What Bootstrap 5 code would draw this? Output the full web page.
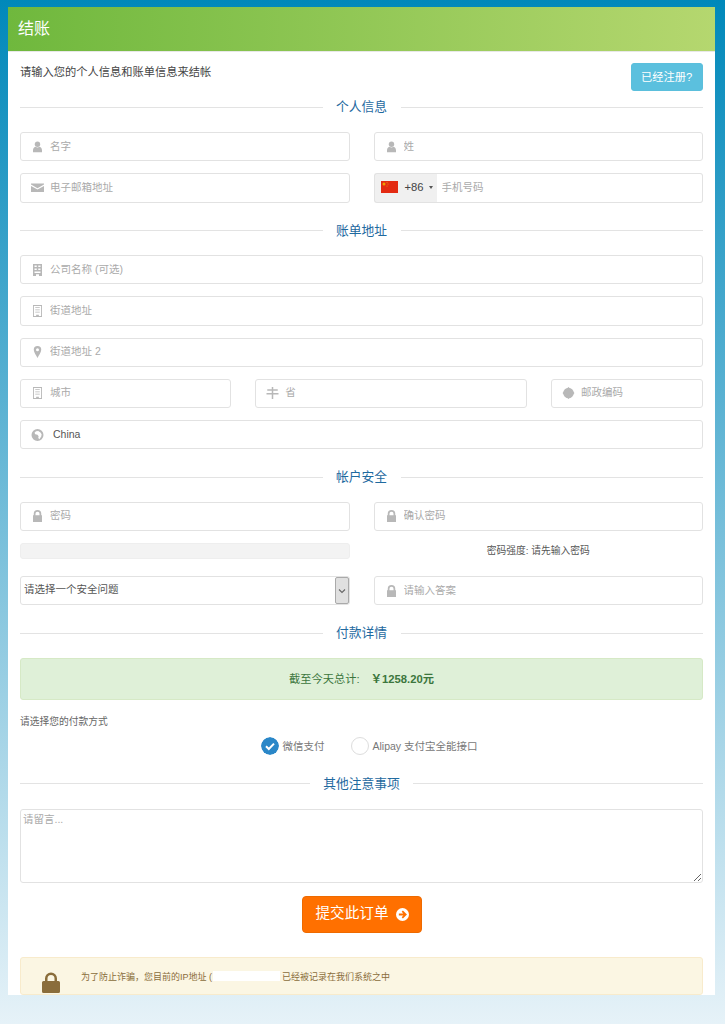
<!DOCTYPE html>
<html lang="zh">
<head>
<meta charset="utf-8">
<title>结账</title>
<link rel="stylesheet" href="https://cdn.jsdelivr.net/npm/bootstrap@5.3.0/dist/css/bootstrap.min.css">
<style>
html,body{height:1024px;overflow:hidden}
body{margin:0;background:linear-gradient(180deg,#0088ba 0,#e6f2f8 100%);font-family:"Liberation Sans","Noto Sans CJK SC",sans-serif;font-size:11.25px;color:#444}
.co-panel{margin:7px 10px 0 8px;height:988px;background:#fff;overflow:hidden}
.co-head{height:45px;padding:0 10px;background:linear-gradient(90deg,#6fb83d,#b5d76f);border-bottom:1px solid #e8e8e8;color:#fff;font-size:16px;line-height:43px}
.co-body{padding:11px 12px 0}
.co-intro{height:35px}
.co-intro p{margin:2px 0 0;line-height:15px;color:#444}
.co-reg{height:28px;width:72.5px;padding:0;font-size:11.25px;color:#fff;background:#5bc0de;border-color:#5bbfdc;border-radius:3px}
.co-title{display:flex;align-items:center;height:40.5px;padding:7px 0 15.500px;color:#1f6a9f;font-size:12.75px;line-height:18px}
.co-title.first{height:34px;padding:0 0 16px}
.co-title::before,.co-title::after{content:"";flex:1;border-top:1px solid #e3e3e3}
.co-title span{padding:0 13.5px}
.co-field{position:relative;margin-bottom:12px;height:29.25px}
.co-input{display:block;width:100%;height:100%;padding:0 6px 2px 29px;border:1px solid #e2e2e2;border-radius:3px;background:#fff;font-family:inherit;font-size:10.5px;color:#555;outline:0}
.co-input::placeholder,.co-area::placeholder{color:#aaa;opacity:1}
.co-input.co-country{padding-left:32px}
.co-ico{position:absolute;left:11px;top:8.5px;width:13px;height:12px;fill:#b8b8b8;pointer-events:none}
.co-ico.wide{top:8px;height:13px}
.co-phone{flex-wrap:nowrap;height:29.25px}
.co-phone .input-group-text{width:64px;padding:0 0 1px 6px;gap:7px;background:#f0f0f0;border:1px solid #e2e2e2;border-right:0;border-radius:3px 0 0 3px;font-size:11.25px;color:#444}
.co-phone .co-input{flex:1;width:auto;padding-left:5px;border-left:0;border-radius:0 3px 3px 0}
.co-flag{width:17px;height:12px}
.co-caret{width:0;height:0;margin-left:-2px;border:2.5px solid transparent;border-top:3px solid #555;border-bottom:0}
.co-strength{height:16px;margin-bottom:17px;background:#f3f3f3;border:1px solid #eee;border-radius:3px}
.co-strength-text{height:33px;padding-top:1px;line-height:14px;font-size:9.75px;color:#555;text-align:center}
.co-select{width:100%;height:100%;padding:0 20px 2px 3px;border:1px solid #e2e2e2;border-radius:3px;background:#fff;appearance:none;-webkit-appearance:none;font-family:inherit;font-size:10.5px;color:#555;outline:0}
.co-arrow{position:absolute;right:1px;top:1px;bottom:1px;width:14px;display:flex;align-items:center;justify-content:center;background:#e0e0e0;border:1px solid #aaa;border-radius:2px;pointer-events:none}
.co-arrow svg{width:8px;height:6px;stroke:#666;fill:none;stroke-width:1.1}
.co-total{height:42px;margin-bottom:16px;background:#dff0d8;border:1px solid #d6e9c6;border-radius:3px;color:#3c763d;font-size:11.25px;line-height:40px;text-align:center}
.co-total b{margin-left:8px}
.co-paylabel{height:12px;margin-bottom:8px;line-height:12px;font-size:9.75px;color:#666}
.co-pay{height:20px;margin-bottom:19px;padding-left:16px;gap:27px;font-size:10.5px;color:#777;line-height:20px}
.co-dot{width:18px;height:18px;border-radius:50%;margin-right:3px;flex:none}
.co-dot.off{border:1px solid #ddd;background:#fff}
.co-area{display:block;width:100%;height:74.5px;padding:2px;border:1px solid #e2e2e2;border-radius:3px;font-family:inherit;font-size:10.5px;color:#555;outline:0}
.co-submit{display:inline-flex;align-items:center;gap:8px;height:37px;width:120px;margin-top:12.5px;padding:0 0 0 13px;border:1px solid #ee6a00;border-radius:4px;background:#ff7000;color:#fff;font-size:14.6px}
.co-submit svg{width:13px;height:13px;fill:#fff}
.co-note{height:38px;margin-top:24px;padding:0 0 0 21px;background:#fbf6e3;border:1px solid #f8ebcc;border-radius:3px;color:#8a6d3b;font-size:9px}
.co-note svg{width:18px;height:21px;margin-top:14px;fill:#8a6d3b;flex:none}
.co-note p{margin:12px 0 0 21px;line-height:14px}
.co-mask{display:inline-block;width:67px;height:10px;margin:0 2px 0 1px;vertical-align:-1px;background:#fff}
.co-w4{flex:0 0 235.3px;width:235.3px}
.co-w5{flex:0 0 295.7px;width:295.7px}
.co-w3{flex:1 0 0;width:auto}
</style>
</head>
<body>
<svg width="0" height="0" class="position-absolute">
<defs>
<symbol id="i-user" viewBox="0 0 16 16"><circle cx="8" cy="4.4" r="3.6"/><path d="M2 15v-2.6C2 9.6 4 8 5.6 7.8 6.3 8.5 7.1 8.8 8 8.8s1.700-.3 2.400-1C12 8 14 9.600 14 12.400V15z"/></symbol>
<symbol id="i-mail" viewBox="0 0 16 16"><path d="M0 3h16v1.300L8 9 0 4.300z"/><path d="M0 6l8 4.600L16 6v7.500H0z"/></symbol>
<symbol id="i-bld" viewBox="0 0 16 16"><path fill-rule="evenodd" d="M2 0h12v16H2zM4 2v2h3V2zm5 0v2h3V2zM4 6v2h3V6zm5 0v2h3V6zM4 10v2h8v-2zM6 13.500V16h4v-2.500z"/></symbol>
<symbol id="i-bldo" viewBox="0 0 16 16"><path fill-rule="evenodd" d="M2 0h12v16H2zm1.200 1.200v13.600h3V13h3.600v1.800h3V1.200zM5 3h6v1H5zm0 3h6v1H5zm0 3h6v1H5z"/></symbol>
<symbol id="i-pin" viewBox="0 0 16 16"><path fill-rule="evenodd" d="M8 0a5 5 0 0 1 5 5c0 3-3.500 8-5 11-1.500-3-5-8-5-11a5 5 0 0 1 5-5zm0 3a2 2 0 1 0 0 4 2 2 0 0 0 0-4z"/></symbol>
<symbol id="i-sign" viewBox="0 0 16 16"><path d="M7 0h2v3h6v2H9v3h7v2H9v6H7v-6H0V8h7V5H1V3h6z"/></symbol>
<symbol id="i-cert" viewBox="0 0 16 16"><circle cx="8" cy="8" r="7"/><path d="M8 0l2 2H6zM8 16l2-2H6zM0 8l2 2V6zM16 8l-2 2V6z"/></symbol>
<symbol id="i-globe" viewBox="0 0 16 16"><path fill-rule="evenodd" d="M8 0a8 8 0 1 1 0 16A8 8 0 0 1 8 0zm1 2.500L6 3 4 5l1 2 3 .5 1.500 2L9 12l1.500 1.500L13 10l.5-3L12 4.500z"/></symbol>
<symbol id="i-lock" viewBox="0 0 16 16"><path fill-rule="evenodd" d="M3 7V5a5 5 0 0 1 10 0v2h1v9H2V7zm2.300 0h5.400V5a2.700 2.700 0 0 0-5.400 0z"/></symbol>
</defs>
</svg>
<div class="co-panel">
  <div class="co-head">结账</div>
  <div class="co-body">
    <div class="co-intro d-flex justify-content-between align-items-start">
      <p>请输入您的个人信息和账单信息来结帐</p>
      <button type="button" class="btn btn-info co-reg">已经注册?</button>
    </div>

    <div class="co-title first"><span>个人信息</span></div>
    <div class="row gx-4">
      <div class="col-6"><div class="co-field"><svg class="co-ico"><use href="#i-user"/></svg><input class="co-input" placeholder="名字"></div></div>
      <div class="col-6"><div class="co-field"><svg class="co-ico"><use href="#i-user"/></svg><input class="co-input" placeholder="姓"></div></div>
      <div class="col-6"><div class="co-field"><svg class="co-ico wide"><use href="#i-mail"/></svg><input class="co-input" placeholder="电子邮箱地址"></div></div>
      <div class="col-6"><div class="co-field">
        <div class="input-group co-phone">
          <span class="input-group-text">
            <svg class="co-flag" viewBox="0 0 17 12"><rect width="17" height="12" fill="#e32a12"/><circle cx="3" cy="3" r="1.500" fill="#f0a000"/><circle cx="6" cy="1.500" r=".5" fill="#f0a000"/><circle cx="7" cy="3" r=".5" fill="#f0a000"/><circle cx="6" cy="5" r=".5" fill="#f0a000"/></svg>
            +86<i class="co-caret"></i>
          </span>
          <input class="co-input" placeholder="手机号码">
        </div>
      </div></div>
    </div>

    <div class="co-title"><span>账单地址</span></div>
    <div class="co-field"><svg class="co-ico"><use href="#i-bld"/></svg><input class="co-input" placeholder="公司名称 (可选)"></div>
    <div class="co-field"><svg class="co-ico"><use href="#i-bldo"/></svg><input class="co-input" placeholder="街道地址"></div>
    <div class="co-field"><svg class="co-ico"><use href="#i-pin"/></svg><input class="co-input" placeholder="街道地址 2"></div>
    <div class="row gx-4">
      <div class="co-w4"><div class="co-field"><svg class="co-ico"><use href="#i-bldo"/></svg><input class="co-input" placeholder="城市"></div></div>
      <div class="co-w5"><div class="co-field"><svg class="co-ico"><use href="#i-sign"/></svg><input class="co-input" placeholder="省"></div></div>
      <div class="co-w3"><div class="co-field"><svg class="co-ico"><use href="#i-cert"/></svg><input class="co-input" placeholder="邮政编码"></div></div>
    </div>
    <div class="co-field"><svg class="co-ico"><use href="#i-globe"/></svg><input class="co-input co-country" value="China"></div>

    <div class="co-title"><span>帐户安全</span></div>
    <div class="row gx-4">
      <div class="col-6">
        <div class="co-field"><svg class="co-ico"><use href="#i-lock"/></svg><input class="co-input" type="password" placeholder="密码"></div>
        <div class="co-strength"></div>
      </div>
      <div class="col-6">
        <div class="co-field"><svg class="co-ico"><use href="#i-lock"/></svg><input class="co-input" type="password" placeholder="确认密码"></div>
        <div class="co-strength-text">密码强度: 请先输入密码</div>
      </div>
      <div class="col-6"><div class="co-field">
        <select class="co-select"><option>请选择一个安全问题</option></select>
        <span class="co-arrow"><svg viewBox="0 0 8 6"><path d="M1 1.500l3 3 3-3"/></svg></span>
      </div></div>
      <div class="col-6"><div class="co-field"><svg class="co-ico"><use href="#i-lock"/></svg><input class="co-input" placeholder="请输入答案"></div></div>
    </div>

    <div class="co-title"><span>付款详情</span></div>
    <div class="co-total">截至今天总计: <b>￥1258.20元</b></div>
    <div class="co-paylabel">请选择您的付款方式</div>
    <div class="co-pay d-flex justify-content-center">
      <div class="d-flex align-items-center">
        <svg class="co-dot" viewBox="0 0 18 18"><circle cx="9" cy="9" r="9" fill="#2a87c8"/><path d="M5 9.200l2.800 2.800L13 6.600" fill="none" stroke="#fff" stroke-width="2"/></svg>微信支付
      </div>
      <div class="d-flex align-items-center"><span class="co-dot off"></span>Alipay 支付宝全能接口</div>
    </div>

    <div class="co-title first"><span>其他注意事项</span></div>
    <textarea class="co-area" placeholder="请留言..."></textarea>
    <div class="text-center">
      <button type="button" class="btn co-submit">提交此订单
        <svg viewBox="0 0 16 16"><path fill-rule="evenodd" d="M8 0a8 8 0 1 1 0 16A8 8 0 0 1 8 0zm.5 3L7 4.500 9 6.900H3.500v2.200H9L7 11.500 8.500 13l5-5z"/></svg>
      </button>
    </div>
    <div class="co-note d-flex">
      <svg viewBox="0 0 18 21"><path fill-rule="evenodd" d="M3 9V6.500a6 6 0 0 1 12 0V9h1.500a1.500 1.500 0 0 1 1.500 1.500v9a1.500 1.500 0 0 1-1.500 1.500h-15A1.500 1.500 0 0 1 0 19.500v-9A1.500 1.500 0 0 1 1.500 9zm2.500 0h7V6.500a3.500 3.500 0 0 0-7 0z"/></svg>
      <p>为了防止诈骗，您目前的IP地址 (<span class="co-mask"></span>已经被记录在我们系统之中</p>
    </div>
  </div>
</div>
<script src="https://cdn.jsdelivr.net/npm/bootstrap@5.3.0/dist/js/bootstrap.bundle.min.js"></script>
</body>
</html>
